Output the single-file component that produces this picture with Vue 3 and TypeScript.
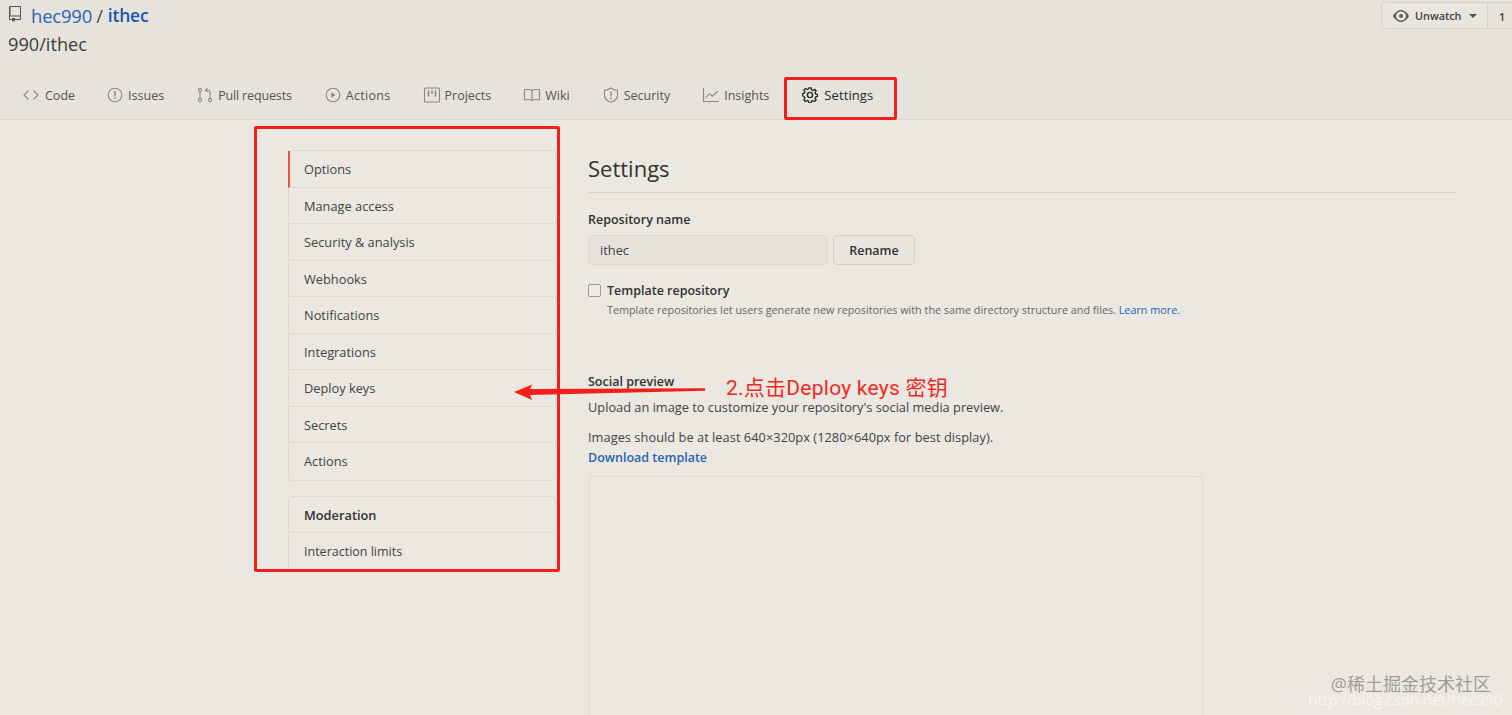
<script setup lang="ts">
const tabs = [
  { name: 'Code', icon: 'code' },
  { name: 'Issues', icon: 'issue' },
  { name: 'Pull requests', icon: 'pr' },
  { name: 'Actions', icon: 'play' },
  { name: 'Projects', icon: 'project' },
  { name: 'Wiki', icon: 'book' },
  { name: 'Security', icon: 'shield' },
  { name: 'Insights', icon: 'graph' },
]
const menu = ['Manage access', 'Security & analysis', 'Webhooks', 'Notifications', 'Integrations', 'Deploy keys', 'Secrets', 'Actions']
</script>

<template>
  <div class="page">
    <header class="head">
      <div class="top">
        <div class="title-block">
          <div class="repo-line">
            <svg class="repo-icon" width="14" height="16" viewBox="0 0 12 16" fill="#55534f">
              <path fill-rule="evenodd" d="M12 1v12c0 .55-.45 1-1 1H6v2l-1.500-1.500L3 16v-2H1c-.55 0-1-.45-1-1V1c0-.55.45-1 1-1h10c.55 0 1 .45 1 1zm-1 9.500H1V13h2v-1h3v1h5v-2.500zM11 1H1.500v8.500H11V1z" />
            </svg>
            <a class="owner">hec990</a><span class="sep">/</span><a class="repo">ithec</a>
          </div>
          <div class="desc">990/ithec</div>
        </div>
        <div class="watch">
          <div class="watch-btn">
            <svg width="16" height="16" viewBox="0 0 16 16" fill="#5a5855">
              <path fill-rule="evenodd" d="M8.06 2C3 2 0 8 0 8s3 6 8.06 6C13 14 16 8 16 8s-3-6-7.94-6zM8 12.5C5.2 12.5 3 10.3 3 8s2.2-4.5 5-4.5 5 2.2 5 4.5-2.2 4.500-5 4.500zM10 8a2 2 0 1 1-4 0 2 2 0 0 1 4 0z" />
            </svg>
            <span>Unwatch</span>
            <i class="caret"></i>
          </div>
          <div class="watch-count">1</div>
        </div>
      </div>
      <nav class="tabs">
        <a v-for="t in tabs" :key="t.name" class="tab" :class="'tab-' + t.icon">
          <svg width="18" height="16" viewBox="0 0 18 16" fill="none" stroke="#8b8985" stroke-width="1.1">
            <g v-if="t.icon === 'code'"><path d="M6.500 3.500 2 8l4.500 4.500M11.500 3.500 16 8l-4.500 4.500" /></g>
            <g v-else-if="t.icon === 'issue'"><circle cx="9" cy="8" r="6.800" /><path d="M9 4v5.200M9 10.600v1.400" stroke-width="1.500" /></g>
            <g v-else-if="t.icon === 'pr'"><circle cx="4" cy="3" r="1.600" /><circle cx="4" cy="13" r="1.600" /><circle cx="14" cy="13" r="1.600" /><path d="M4 4.600v6.800M14 11.400V5c0-1-.7-1.800-1.800-1.800H10M11.500 1.300 9.600 3.200l1.900 1.900" /></g>
            <g v-else-if="t.icon === 'play'"><circle cx="9" cy="8" r="6.800" /><path d="M7.300 5.300 11.500 8l-4.200 2.700z" fill="#8b8985" stroke="none" /></g>
            <g v-else-if="t.icon === 'project'"><rect x="1.500" y="1" width="15" height="14" rx="1" /><path d="M5.500 3.500v6M9 3.500v3.500M12.500 3.500v6" stroke-width="1.500" /></g>
            <g v-else-if="t.icon === 'book'"><path d="M9 3.500C7.500 2.300 4.500 2.300 1.500 2.800v10c3-.5 6-.5 7.500.7 1.500-1.200 4.500-1.200 7.500-.7v-10C13.500 2.300 10.500 2.300 9 3.500zM9 3.500v10" /></g>
            <g v-else-if="t.icon === 'shield'"><path d="M9 1c2 1.500 4.200 2.200 6.500 2.200v5C15.500 12 12 14.200 9 15.200 6 14.200 2.500 12 2.500 8.200v-5C4.800 3.200 7 2.500 9 1z" /><path d="M9 4.500v5M9 10.800v1.400" stroke-width="1.400" /></g>
            <g v-else><path d="M1.500 1v13.500h15.500M3.500 11l3.800-4.300 3 2.500 5.700-5.200" /></g>
          </svg>
          <span>{{ t.name }}</span>
        </a>
        <a class="tab active">
          <svg width="16" height="16" viewBox="0 0 16 16" fill="none" stroke="#24292e" stroke-width="1.400">
            <path d="M6.800 1h2.400l.4 2 1.500.7 1.800-1.100 1.600 1.600-1.100 1.800.7 1.500 1.900.4v2.200l-1.900.4-.7 1.500 1.100 1.800-1.600 1.600-1.800-1.100-1.500.7-.4 1.900H6.800l-.4-1.900-1.500-.7-1.800 1.100-1.600-1.600 1.100-1.800-.7-1.500L.000 9.100V6.900l1.900-.4.7-1.500L1.500 3.200l1.600-1.600 1.800 1.100 1.500-.7z" transform="translate(.5 0) scale(.94)" />
            <circle cx="8" cy="8" r="2.600" />
          </svg>
          <span>Settings</span>
        </a>
      </nav>
    </header>

    <div class="body">
      <aside class="side">
        <ul class="menu first">
          <li class="item selected">Options</li>
          <li v-for="m in menu" :key="m" class="item">{{ m }}</li>
        </ul>
        <ul class="menu second">
          <li class="item heading">Moderation</li>
          <li class="item">Interaction limits</li>
        </ul>
      </aside>

      <main class="main">
        <h1 class="page-title">Settings</h1>
        <label class="field-label">Repository name</label>
        <div class="name-row">
          <div class="input">ithec</div>
          <div class="btn">Rename</div>
        </div>
        <div class="check-row">
          <span class="check"></span>
          <div>
            <div class="check-title">Template repository</div>
            <p class="note">Template repositories let users generate new repositories with the same directory structure and files. <a class="link">Learn more.</a></p>
          </div>
        </div>
        <h2 class="social-title">Social preview</h2>
        <p class="copy">Upload an image to customize your repository's social media preview.</p>
        <p class="copy second-copy">Images should be at least 640×320px (1280×640px for best display).</p>
        <a class="download">Download template</a>
        <div class="preview"></div>
      </main>
    </div>

    <div class="mark mark-tab"></div>
    <div class="mark mark-side"></div>
    <svg class="arrow" width="200" height="22" viewBox="0 0 200 22">
      <path d="M0 11 18 3.500l-2 4.500L191 7.300l.2 2.400L16 14l2 5z" fill="#f5201c" />
    </svg>
    <div class="callout">2.点击Deploy keys 密钥</div>
    <div class="wm">
      <div class="wm-cn">@稀土掘金技术社区</div>
      <div class="wm-url">http://blog.csdn.net/hec990</div>
    </div>
  </div>
</template>

<style>
html, body { margin: 0; background: #ebe8e2; }
</style>

<style scoped>
.page {
  position: relative;
  height: 715px;
  overflow: hidden;
  background: #ebe8e2;
  font-family: "Open Sans", "Noto Sans CJK SC", sans-serif;
  color: #3b3a38;
  font-size: 13px;
}
a { text-decoration: none; }
.head {
  height: 119px;
  background: #e6e3dd;
  border-bottom: 1px solid #d9d6d0;
}
.top { display: flex; justify-content: space-between; height: 70px; padding-left: 8px; }
.title-block { padding-top: 2px; }
.repo-line { display: flex; align-items: center; height: 26px; font-size: 18.500px; letter-spacing: -.2px; }
.repo-icon { margin-right: 9px; margin-top: -2px; }
.owner { color: #2a63b4; }
.sep { margin: 0 5px 0 4px; color: #4a4946; }
.repo { color: #1a57ac; font-weight: 600; font-size: 17.500px; }
.desc { margin-top: 3px; font-size: 18.200px; line-height: 26px; color: #3d3c3a; }
.watch { display: flex; height: 27px; margin-top: 2px; font-size: 10.800px; font-weight: 600; color: #3f3e3b; }
.watch-btn {
  display: flex; align-items: center; gap: 6px;
  width: 107px; box-sizing: border-box; padding-left: 11px;
  border: 1px solid #d4d1cb; border-radius: 4px 0 0 4px; background: #e9e6e0;
}
.caret { margin-left: 2px; border: 4px solid transparent; border-top-color: #55534f; border-bottom: 0; }
.watch-count { width: 25px; padding-left: 12px; box-sizing: border-box; line-height: 27px; border-top: 1px solid #d4d1cb; border-bottom: 1px solid #d4d1cb; margin-left: -1px; }
.tabs { display: flex; padding-left: 22px; height: 49px; }
.tab { display: flex; align-items: center; gap: 4px; margin-right: 32px; height: 50px; color: #55534f; font-size: 12.500px; white-space: nowrap; }
.tab-code { gap: 5px; margin-right: 31px; }
.tab-pr { letter-spacing: -.15px; }
.tab-play { letter-spacing: .3px; }
.tab-graph { margin-right: 33px; }
.tab.active { color: #24292e; gap: 6px; font-size: 13px; letter-spacing: .1px; }
.body { display: flex; padding: 30px 55px 0 288px; gap: 32px; }
.side { width: 268px; flex: none; }
.menu { margin: 0; padding: 0; list-style: none; border: 1px solid #dcd9d3; border-radius: 4px; }
.menu.second { margin-top: 15px; }
.item {
  height: 36.500px; box-sizing: border-box; line-height: 37px; padding-left: 15px;
  border-bottom: 1px solid #dedbd5; font-size: 12.800px; color: #44433f; white-space: nowrap;
}
.item:last-child { border-bottom: 0; }
.menu.second .item { font-size: 12.500px; line-height: 38px; }
.item.selected { border-left: 2px solid #e8553f; padding-left: 14px; margin-left: -1px; }
.menu.second .item.heading { font-weight: 600; font-size: 12.800px; line-height: 36px; color: #33322f; }
.main { flex: 1; }
.page-title { margin: 0; height: 42px; line-height: 37px; font-size: 22px; font-weight: 400; color: #33322f; border-bottom: 1px solid #d6d3cd; }
.field-label { display: block; margin-top: 18px; font-size: 12.500px; line-height: 18px; font-weight: 600; color: #33322f; }
.name-row { display: flex; gap: 5px; margin-top: 6px; }
.input {
  width: 240px; height: 30px; box-sizing: border-box; padding-left: 11px; line-height: 28px;
  background: #e6e3dd; border: 1px solid #dad7d1; border-radius: 4px; font-size: 12.800px; color: #3f3e3b;
}
.btn {
  width: 82px; height: 30px; box-sizing: border-box; text-align: center; line-height: 29px;
  background: #e9e6e0; border: 1px solid #d3d0ca; border-radius: 4px; font-size: 12.500px; font-weight: 600; color: #33322f;
}
.check-row { display: flex; gap: 6px; margin-top: 16px; }
.check { width: 11px; height: 11px; margin-top: 3px; border: 1px solid #9b9995; border-radius: 2px; background: #efece7; flex: none; }
.check-title { font-size: 12.500px; font-weight: 600; line-height: 19px; color: #33322f; }
.note { margin: 1px 0 0; font-size: 10.800px; line-height: 18px; color: #686662; white-space: nowrap; }
.link { color: #2a63b4; }
.social-title { margin: 54px 0 0; font-size: 12.500px; font-weight: 600; line-height: 18px; color: #33322f; }
.copy { margin: 7px 0 0; font-size: 12.800px; line-height: 18px; color: #44433f; white-space: nowrap; }
.second-copy { margin-top: 12px; letter-spacing: .04px; }
.download { display: block; margin-top: 3px; font-size: 12.500px; line-height: 18px; font-weight: 600; color: #2a63b4; }
.preview { width: 613px; height: 300px; margin-top: 9px; border: 1px solid #dedbd5; border-radius: 4px; }
.mark { position: absolute; border: 3px solid #f01f1a; border-radius: 2px; box-sizing: border-box; }
.mark-tab { left: 784px; top: 77px; width: 113px; height: 43px; }
.mark-side { left: 254px; top: 126px; width: 306px; height: 446px; }
.arrow { position: absolute; left: 514px; top: 381px; }
.callout { position: absolute; left: 726px; top: 377px; font-family: Roboto, "Noto Sans CJK SC", sans-serif; font-size: 21px; line-height: 22px; letter-spacing: .25px; color: #f0281f; white-space: nowrap; }
.wm { position: absolute; right: 0; top: 675px; display: flex; flex-direction: column; align-items: flex-end; }
.wm-cn { margin-right: 21px; font-size: 18px; line-height: 18px; color: #a09e9a; white-space: nowrap; }
.wm-url { margin-right: 10px; font-size: 15px; line-height: 12px; color: #f7f5f1; white-space: nowrap; }
</style>
